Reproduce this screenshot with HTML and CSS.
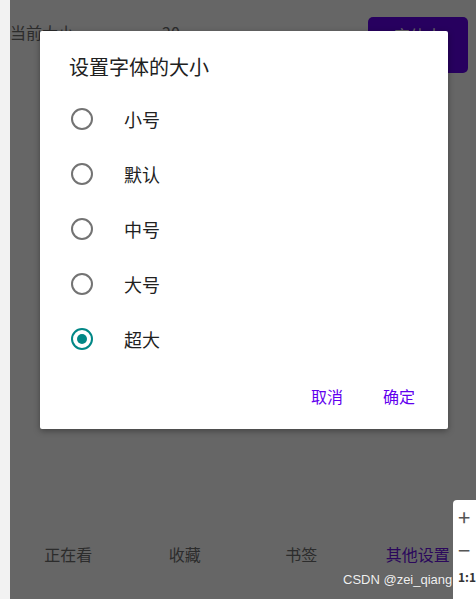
FILE: index.html
```html
<!DOCTYPE html>
<html lang="zh">
<head>
  <meta charset="UTF-8">
  <title>设置字体的大小</title>
  <link rel="stylesheet" href="styles.css">
</head>
<body>

<div class="page">
  <div class="side-strip"></div>

  <!-- App behind the dialog -->
  <div class="app">
    <div class="top-row">
      <span class="cur-label">当前大小</span>
      <span class="cur-value">20</span>
      <button class="size-button">字体大<br>小</button>
    </div>

    <div class="bottom-nav">
      <span class="nav-item">正在看</span>
      <span class="nav-item">收藏</span>
      <span class="nav-item">书签</span>
      <span class="nav-item active">其他设置</span>
    </div>

    <div class="scrim"></div>

    <!-- Dialog -->
    <div class="dialog">
      <h2 class="dialog-title">设置字体的大小</h2>
      <div class="options">
        <label class="option"><span class="radio"></span>小号</label>
        <label class="option"><span class="radio"></span>默认</label>
        <label class="option"><span class="radio"></span>中号</label>
        <label class="option"><span class="radio"></span>大号</label>
        <label class="option"><span class="radio checked"></span>超大</label>
      </div>
      <div class="actions">
        <span class="action">取消</span>
        <span class="action">确定</span>
      </div>
    </div>

    <div class="zoom-panel">
      <span class="zoom-btn">+</span>
      <span class="zoom-btn">−</span>
      <span class="zoom-ratio">1:1</span>
    </div>
    <div class="watermark">CSDN @zei_qiang</div>
  </div>
</div>

</body>
</html>
```

FILE: styles.css
```css
body {
  margin: 0;
  font-family: "Noto Sans CJK SC", "Noto Sans", sans-serif;
  background-color: #f2f2f2;
}

.page {
  display: flex;
  width: 476px;
  height: 599px;
  overflow: hidden;
}

.side-strip {
  width: 10px;
  flex-shrink: 0;
  background-color: #f2f2f2;
}

.app {
  position: relative;
  flex: 1;
  background-color: #ffffff;
}

.top-row {
  display: flex;
  align-items: center;
  height: 56px;
  margin-top: 17px;
  color: #6e6e6e;
  font-size: 16px;
}

.cur-label {
  width: 152px;
  margin-top: -26px;
}

.cur-value {
  flex: 1;
  margin-top: -26px;
}

.size-button {
  width: 100px;
  height: 56px;
  margin-right: 8px;
  padding: 2px 0 0 0;
  border: none;
  border-radius: 5px;
  background-color: #6200ee;
  color: #fff;
  font-family: inherit;
  font-size: 16px;
  line-height: 22px;
  text-align: center;
  display: block;
  box-sizing: border-box;
}

.bottom-nav {
  position: absolute;
  left: 0;
  right: 0;
  bottom: 33px;
  display: flex;
  font-size: 16px;
  color: #6e6e6e;
}

.nav-item {
  width: 119px;
  text-align: center;
}

.nav-item.active {
  color: #6b12e6;
}

.scrim {
  position: absolute;
  inset: 0;
  background-color: rgba(0, 0, 0, 0.6);
}

.dialog {
  position: absolute;
  left: 30px;
  top: 31px;
  width: 408px;
  height: 398px;
  background-color: #fff;
  border-radius: 2px;
  box-shadow: 0 2px 6px rgba(0, 0, 0, 0.35);
  box-sizing: border-box;
  padding: 22px 0 0 0;
}

.dialog-title {
  margin: 0 0 0 29px;
  font-size: 20px;
  font-weight: normal;
  color: #212121;
  line-height: 28px;
}

.options {
  display: flex;
  flex-direction: column;
  margin-top: 10px;
}

.option {
  display: flex;
  align-items: center;
  height: 55px;
  padding-left: 31px;
  font-size: 18px;
  color: #212121;
}

.radio {
  width: 18px;
  height: 18px;
  border: 2px solid #737373;
  border-radius: 50%;
  margin-right: 31px;
  box-sizing: content-box;
  position: relative;
}

.radio.checked {
  border-color: #018786;
}

.radio.checked::after {
  content: "";
  position: absolute;
  left: 4px;
  top: 4px;
  width: 10px;
  height: 10px;
  border-radius: 50%;
  background-color: #018786;
}

.actions {
  display: flex;
  justify-content: flex-end;
  gap: 40px;
  margin-top: 18px;
  padding-right: 33px;
}

.action {
  font-size: 16px;
  color: #6200ee;
}

.zoom-panel {
  position: absolute;
  left: 443px;
  top: 500px;
  width: 40px;
  height: 110px;
  background-color: #fff;
  border-radius: 4px;
  display: flex;
  flex-direction: column;
  padding-left: 5px;
  color: #555;
}

.zoom-btn {
  font-size: 22px;
  line-height: 33px;
}

.zoom-ratio {
  font-size: 12px;
  font-weight: bold;
  color: #333;
  margin-top: 2px;
}

.watermark {
  position: absolute;
  left: 333px;
  top: 572px;
  font-family: "Liberation Sans", sans-serif;
  font-size: 13px;
  color: #f0f0f0;
  text-shadow: 0 0 1px #555;
}
```
